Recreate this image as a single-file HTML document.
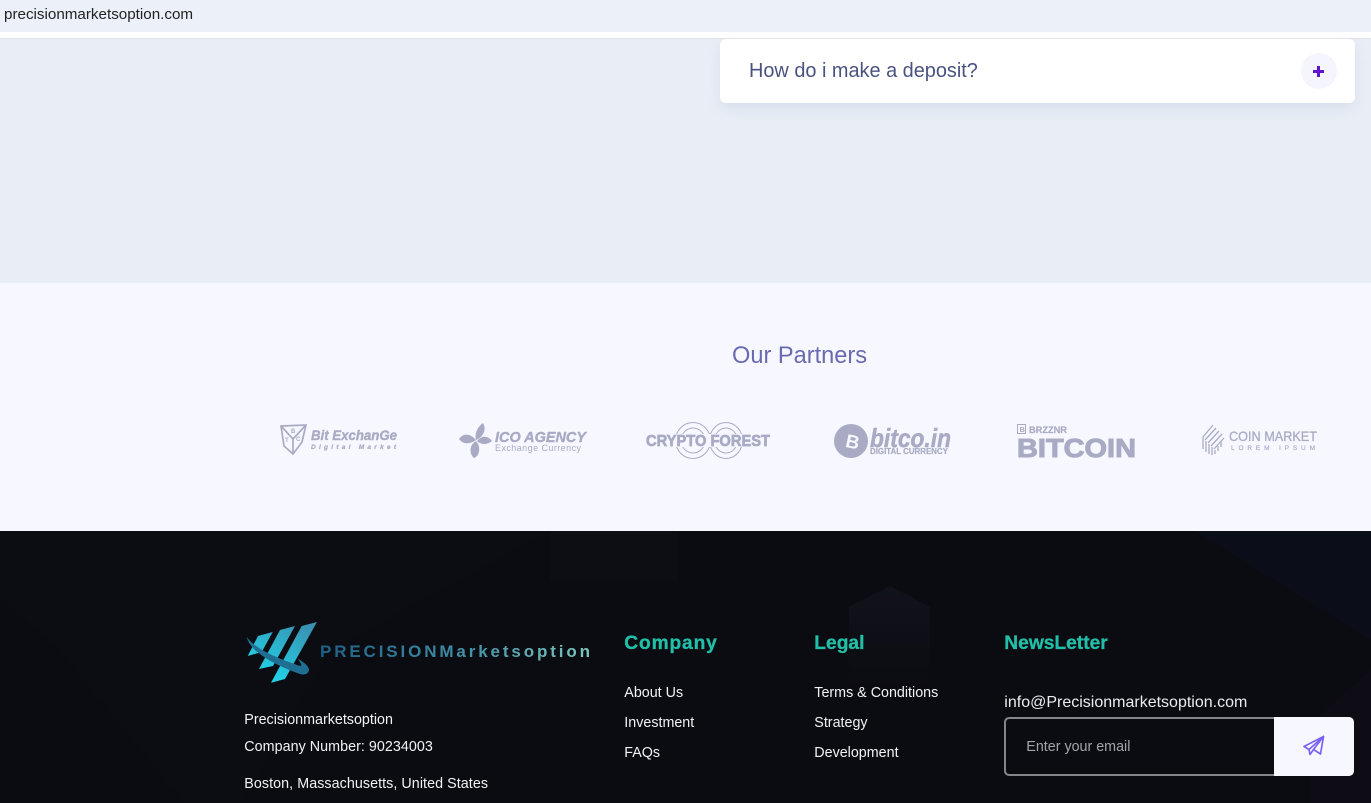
<!DOCTYPE html>
<html lang="en">
<head>
<meta charset="utf-8">
<title>Precisionmarketsoption</title>
<style>
*{box-sizing:border-box;margin:0;padding:0}
html,body{width:1371px;height:803px;overflow:hidden;background:#fff;font-family:"Liberation Sans",sans-serif}
.abs{position:absolute;white-space:nowrap}
#top{position:absolute;left:0;top:0;width:1371px;height:32px;background:#ecf1f9}
#faq{position:absolute;left:0;top:38px;width:1371px;height:245px;background:#e9eef6;border-top:1px solid #e2e4e8}
#card{position:absolute;left:720px;top:39px;width:635px;height:64px;background:#fff;border-radius:6px;box-shadow:0 6px 14px rgba(120,135,180,.14)}
#partners{position:absolute;left:0;top:283px;width:1371px;height:248px;background:#f7f8ff}
#footer{position:absolute;left:0;top:531px;width:1371px;height:272px;background:#0b0c11;overflow:hidden}
.link{color:#f2f2f4;font-size:14.3px;line-height:20px}
.head{color:#22bfa8;font-size:19.2px;font-weight:700;line-height:24px;-webkit-text-stroke:.3px #22bfa8}
</style>
</head>
<body>
<div id="top"></div>
<div class="abs" style="left:4px;top:6px;font-size:15.2px;line-height:18px;color:#222">precisionmarketsoption.com</div>
<div id="faq"></div>
<div id="card"></div>
<div class="abs" style="left:749px;top:58px;font-size:19.9px;line-height:26px;color:#4a5380">How do i make a deposit?</div>
<div class="abs" style="left:1301px;top:53px;width:36px;height:36px;border-radius:50%;background:#f5f5fe"></div>
<div class="abs" style="left:1313px;top:70px;width:11px;height:2.500px;background:#5f14cc"></div>
<div class="abs" style="left:1317.250px;top:65.750px;width:2.500px;height:11px;background:#5f14cc"></div>
<div id="partners"></div>
<div class="abs" style="left:732px;top:342px;font-size:23.6px;line-height:28px;color:#6a6ab0">Our Partners</div>

<svg class="abs" style="left:270px;top:410px" width="1060" height="60" viewBox="270 410 1060 60">
<g fill="#a9abc5" font-family="'Liberation Sans',sans-serif">
<g fill="none" stroke="#a9abc5" stroke-width="1.700">
<path d="M281 426L306 425L302 442L293 454L284 446Z"/><path d="M281 426L293 439L306 425M293 439V454"/>
</g>
<text x="291" y="433" font-size="6" font-weight="700">B</text><text x="296" y="441" font-size="6" font-weight="700">C</text><text x="285" y="442" font-size="6" font-weight="700">T</text>
<text x="311" y="440" font-size="14" font-weight="700" font-style="italic" textLength="86" lengthAdjust="spacingAndGlyphs" stroke="#a9abc5" stroke-width=".4">Bit ExchanGe</text>
<text x="311" y="449" font-size="6.500" font-weight="700" font-style="italic" textLength="85" stroke="#a9abc5" stroke-width=".2">Digital Market</text>

<path d="M476 440C474 431 480 425 483 423C487 430 483 437 476 440Z"/>
<path d="M476 441C468 446 470 455 474 458C480 456 481 446 476 441Z"/>
<path d="M476 440C470 433 463 433 459 439C463 445 471 444 476 440Z"/>
<path d="M477 441C483 434 489 437 492 441C487 445 481 445 477 441Z"/>
<text x="495" y="442" font-size="15" font-weight="700" font-style="italic" textLength="91" lengthAdjust="spacingAndGlyphs" stroke="#a9abc5" stroke-width=".4">ICO AGENCY</text>
<text x="495" y="451" font-size="9" textLength="86" lengthAdjust="spacing">Exchange Currency</text>

<g fill="none" stroke="#a9abc5" stroke-width="1">
<ellipse cx="693" cy="440.500" rx="17.500" ry="18"/><ellipse cx="726" cy="440.500" rx="16.500" ry="18"/>
<ellipse cx="693" cy="440.500" rx="12" ry="12.500"/><ellipse cx="726" cy="440.500" rx="11.500" ry="12.500"/>
</g>
<rect x="646" y="434" width="124" height="13" fill="#f7f8ff"/>
<text x="646" y="446" font-size="15.500" font-weight="700" textLength="124" lengthAdjust="spacingAndGlyphs" stroke="#a9abc5" stroke-width=".7">CRYPTO FOREST</text>

<circle cx="851" cy="441" r="17"/>
<text x="846" y="448" font-size="19" font-weight="700" fill="#f7f8ff" transform="rotate(12 851 441)">B</text>
<text x="870" y="447" font-size="26" font-weight="700" font-style="italic" textLength="81" lengthAdjust="spacingAndGlyphs" stroke="#a9abc5" stroke-width=".5">bitco.in</text>
<text x="870" y="454" font-size="8" font-weight="700" textLength="78" lengthAdjust="spacingAndGlyphs" stroke="#a9abc5" stroke-width=".2">DIGITAL CURRENCY</text>

<rect x="1017.500" y="424.500" width="8" height="9" fill="none" stroke="#a9abc5"/>
<text x="1019.500" y="432" font-size="7.500" font-weight="700">B</text>
<text x="1029" y="433" font-size="9.500" font-weight="700" textLength="38" lengthAdjust="spacingAndGlyphs" stroke="#a9abc5" stroke-width=".2">BRZZNR</text>
<text x="1017" y="457" font-size="26" font-weight="700" textLength="119" lengthAdjust="spacingAndGlyphs" stroke="#a9abc5" stroke-width="1">BITCOIN</text>

<g fill="none" stroke="#a9abc5" stroke-width="1.300">
<path d="M1203 437L1213 425M1205 440L1216 428M1208 443L1219 431M1211 446L1222 434M1214 449L1224 438"/>
<path d="M1203 437V449M1206 441V452M1209 444V454M1212 447V455M1215 450V454M1218 446V451M1221 442V447"/>
</g>
<text x="1229" y="441" font-size="13.500" textLength="88" lengthAdjust="spacingAndGlyphs" stroke="#a9abc5" stroke-width=".3">COIN MARKET</text>
<text x="1231" y="450" font-size="6.500" textLength="84" stroke="#a9abc5" stroke-width=".15">LOREM IPSUM</text>
</g>
</svg>

<div id="footer">
<svg class="abs" style="left:0;top:0" width="1371" height="272" viewBox="0 531 1371 272">
<defs><linearGradient id="f" x1="0" y1="0" x2="0" y2="1"><stop offset="0" stop-color="#11121b"/><stop offset="1" stop-color="#0b0c11"/></linearGradient></defs>
<path d="M0 531H550L330 650L240 803H185L60 650L0 598Z" fill="#0b0d13"/>
<path d="M550 531H678V580H550Z" fill="#0c0e14"/>
<path d="M1195 531H1371V640Z" fill="#0b0e18"/>
<path d="M849 607L890 586L930 607V690H849Z" fill="url(#f)"/>
<path d="M1310 725L1371 670V803H1310Z" fill="#0e0d16"/>
</svg>
</div>

<svg class="abs" style="left:240px;top:615px" width="360" height="75" viewBox="240 615 360 75">
<defs>
<linearGradient id="b" gradientUnits="userSpaceOnUse" x1="275" y1="683" x2="310" y2="622"><stop offset="0" stop-color="#20d4e8"/><stop offset="1" stop-color="#3a8eb0"/></linearGradient>
<linearGradient id="t" x1="0" y1="0" x2="1" y2="0"><stop offset="0" stop-color="#1d5f84"/><stop offset=".5" stop-color="#3f8ca6"/><stop offset="1" stop-color="#7cc7bd"/></linearGradient>
</defs>
<path d="M247.700 656L258 636L272.700 632L261.700 652Z" fill="url(#b)"/>
<path d="M259 669L280 630L295 626L273 666Z" fill="url(#b)"/>
<path d="M271 682.700L301.700 626L317 622L285 679Z" fill="url(#b)"/>
<path d="M246.700 637C250 652 275 665 300 674C306 676 311 672 308 667C306 664 302 661 298 659C302 665 303 667 297 665C280 659 256 650 246.700 637Z" fill="#1f6f92"/>
<text x="320" y="657" font-family="'Liberation Sans',sans-serif" font-size="17" font-weight="700" fill="url(#t)" textLength="270" lengthAdjust="spacing">PRECISIONMarketsoption</text>
</svg>

<div class="abs link" style="left:244.300px;top:710px">Precisionmarketsoption</div>
<div class="abs link" style="left:244.300px;top:737px;letter-spacing:.04px">Company Number: 90234003</div>
<div class="abs link" style="left:244.300px;top:774px;letter-spacing:.06px">Boston, Massachusetts, United States</div>

<div class="abs head" style="left:624.300px;top:632px;letter-spacing:.85px">Company</div>
<div class="abs link" style="left:624.300px;top:683px">About Us</div>
<div class="abs link" style="left:624.300px;top:713px">Investment</div>
<div class="abs link" style="left:624.300px;top:743px">FAQs</div>

<div class="abs head" style="left:814.300px;top:632px">Legal</div>
<div class="abs link" style="left:814.300px;top:683px">Terms &amp; Conditions</div>
<div class="abs link" style="left:814.300px;top:713px">Strategy</div>
<div class="abs link" style="left:814.300px;top:743px">Development</div>

<div class="abs head" style="left:1004.300px;top:632px">NewsLetter</div>
<div class="abs" style="left:1004.300px;top:692px;font-size:16px;line-height:21px;color:#ececee">info@Precisionmarketsoption.com</div>
<div class="abs" style="left:1004px;top:717px;width:271px;height:59px;border:2px solid #85868a;border-right:0;border-radius:5px 0 0 5px;background:#0b0c11"></div>
<div class="abs" style="left:1026.300px;top:738px;font-size:14.300px;line-height:18px;color:#a4a4a8">Enter your email</div>
<div class="abs" style="left:1274px;top:717px;width:80px;height:59px;background:#f7f7ff;border-radius:0 5px 5px 0"></div>
<svg class="abs" style="left:1302px;top:734px" width="24" height="24" viewBox="0 0 24 24" fill="none" stroke="#7c62f5" stroke-width="1.700" stroke-linejoin="round" stroke-linecap="round">
<path d="M2 12.500L21.500 2.500L18.500 20L11.500 15.500L8 20.500L7 15.500Z"/>
<path d="M21.500 2.500L7 15.500M21.500 2.500L11.500 15.500"/>
</svg>
</body>
</html>
